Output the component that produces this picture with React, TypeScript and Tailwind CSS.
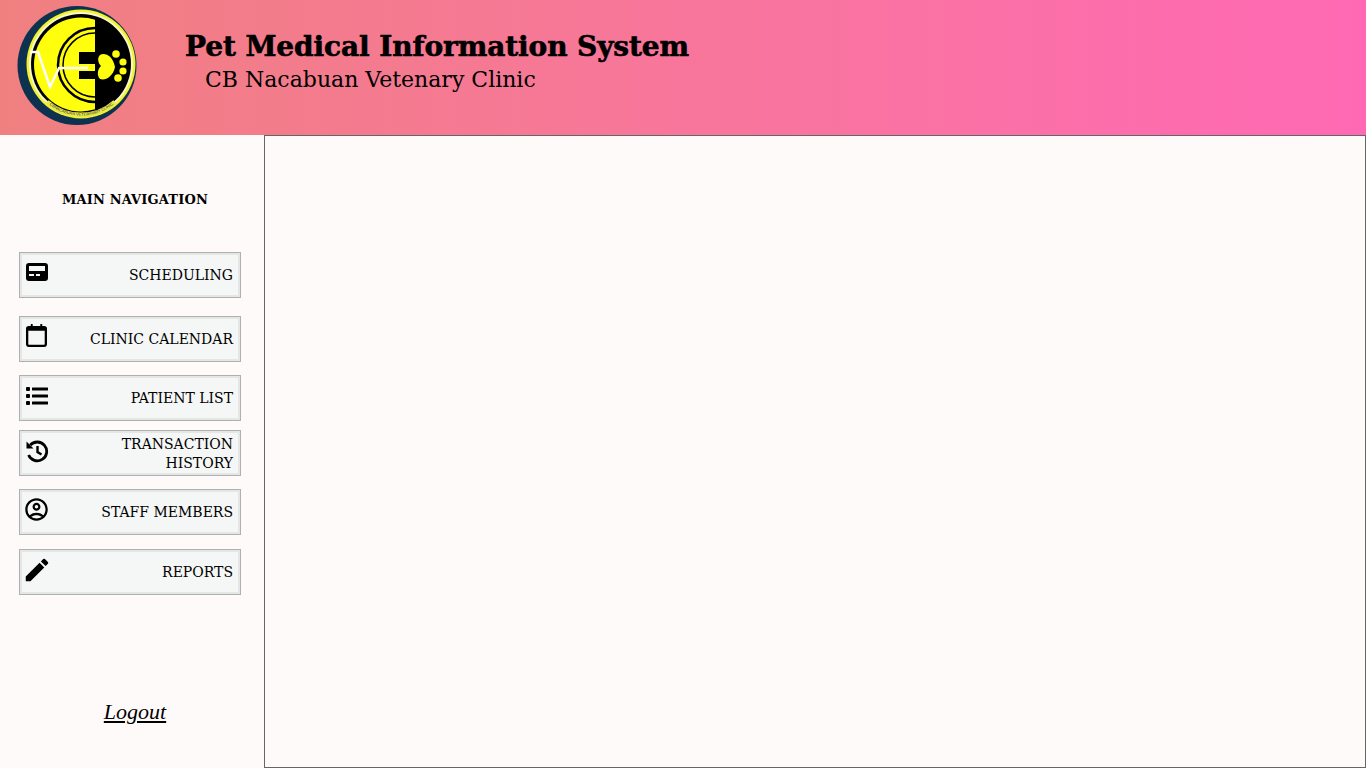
import { MdEdit, MdOutlineAccountCircle } from 'react-icons/md'
import type { ReactNode } from 'react'

function Logo() {
  return (
    <svg width="160" height="135" viewBox="0 0 160 135" className="shrink-0">
      <defs>
        <clipPath id="leftHalf"><rect x="0" y="0" width="95" height="135" /></clipPath>
        <path id="ringText" d="M47 103 A52 52 0 0 0 115 103" />
        <filter id="soft"><feGaussianBlur stdDeviation="0.4" /></filter>
      </defs>
      <g filter="url(#soft)">
        <circle cx="77" cy="65.5" r="59.5" fill="#10324f" />
        <circle cx="81" cy="64" r="54.5" fill="#f2f22e" />
        <circle cx="81" cy="64" r="52" fill="#f8f8c8" />
        <circle cx="81" cy="64" r="50" fill="#000" />
        <g clipPath="url(#leftHalf)">
          <circle cx="81" cy="64.5" r="47" fill="#ffff0a" />
          <circle cx="95" cy="65" r="37" fill="none" stroke="#000" strokeWidth="2.5" />
          <circle cx="95" cy="65" r="32" fill="none" stroke="#000" strokeWidth="1.5" />
          <rect x="79" y="52" width="16" height="12" fill="#000" />
          <rect x="79" y="71" width="16" height="8" fill="#000" />
        </g>
        <path d="M30 52 H38 L50 87 L59 68 H88" fill="none" stroke="#fff" strokeWidth="2.5" />
        <path d="M115 67 C113 55 104 52 100 55 C97 58 98 63 101 66 C97 70 97 76 100 79 C105 81 113 77 115 67 Z" fill="#ffff0a" />
        <circle cx="116" cy="54" r="3.8" fill="#ffff0a" />
        <circle cx="123" cy="62" r="3.6" fill="#ffff0a" />
        <circle cx="123" cy="71" r="3.6" fill="#ffff0a" />
        <circle cx="118" cy="78" r="3.8" fill="#ffff0a" />
        <path d="M47 102 A51 51 0 0 0 115 102" fill="none" stroke="#e9e94a" strokeWidth="5" />
      </g>
      <text fontSize="4" fill="#333" fontFamily="'Liberation Sans', sans-serif">
        <textPath href="#ringText" startOffset="3">CBNACABUAN VETERINARY CLINIC</textPath>
      </text>
    </svg>
  )
}

function PagerIcon() {
  return (
    <svg width="24" height="24" viewBox="0 0 24 24" fill="currentColor">
      <path d="M4 2h16a3 3 0 0 1 3 3v12a3 3 0 0 1-3 3H4a3 3 0 0 1-3-3V5a3 3 0 0 1 3-3Zm0 3v5h16V5H4Zm0 8v2h5v-2H4Zm7 0v2h4v-2h-4Z" fillRule="evenodd" />
    </svg>
  )
}

function CalendarIcon() {
  return (
    <svg width="21" height="23" viewBox="0 0 22 24" fill="currentColor" className="ml-[1px] -mt-[2px]">
      <path d="M5 0h2v2h8V0h2v2h2a3 3 0 0 1 3 3v16a3 3 0 0 1-3 3H3a3 3 0 0 1-3-3V5a3 3 0 0 1 3-3h2V0ZM2.4 7v14a.6.6 0 0 0 .6.6h16a.6.6 0 0 0 .6-.6V7H2.4Z" fillRule="evenodd" />
    </svg>
  )
}

function ListIcon() {
  return (
    <svg width="24" height="20" viewBox="0 0 24 20" fill="currentColor">
      <rect x="1" y="1" width="4" height="4" rx="1" />
      <rect x="1" y="8" width="4" height="4" rx="1" />
      <rect x="1" y="15" width="4" height="4" rx="1" />
      <rect x="7" y="1.5" width="16" height="3" rx="0.5" />
      <rect x="7" y="8.5" width="16" height="3" rx="0.5" />
      <rect x="7" y="15.5" width="16" height="3" rx="0.5" />
    </svg>
  )
}

function HistoryIcon() {
  return (
    <svg width="24" height="24" viewBox="0 0 24 24" fill="none" stroke="currentColor" strokeWidth="2.8">
      <path d="M5.2 6.2A9.4 9.4 0 1 1 3.6 16" />
      <path d="M1.5 2.5v7h7Z" fill="currentColor" stroke="none" />
      <path d="M12.5 7v6l4 2.5" strokeWidth="2.4" />
    </svg>
  )
}

type Item = { label: ReactNode; icon: ReactNode; margin: string }

const items: Item[] = [
  { label: 'SCHEDULING', icon: <PagerIcon />, margin: 'mt-[42px]' },
  { label: 'CLINIC CALENDAR', icon: <CalendarIcon />, margin: 'mt-[18px]' },
  { label: 'PATIENT LIST', icon: <ListIcon />, margin: 'mt-[13px]' },
  { label: <span className="block pt-0.5">TRANSACTION<br />HISTORY</span>, icon: <HistoryIcon />, margin: 'mt-[9px]' },
  { label: 'STAFF MEMBERS', icon: <MdOutlineAccountCircle size={27} className="-ml-0.5" />, margin: 'mt-[13px]' },
  { label: 'REPORTS', icon: <MdEdit size={30} className="-ml-[3px]" />, margin: 'mt-[14px]' },
]

export default function App() {
  return (
    <div className="h-[768px] overflow-hidden bg-[#fffafa] text-black font-['DejaVu_Serif','Liberation_Serif',serif]">
      {/* cabecera */}
      <header className="flex h-[135px] bg-gradient-to-r from-[#f08080] to-[#ff69b4]">
        <Logo />
        <div className="ml-[25px] pt-[29px]">
          <h1 className="text-[28px] leading-[36px] font-bold tracking-[-0.1px] [-webkit-text-stroke:0.6px_black]">Pet Medical Information System</h1>
          <p className="ml-[20px] -mt-px text-[22px] leading-[32px]">CB Nacabuan Vetenary Clinic</p>
        </div>
      </header>

      <div className="flex h-[633px]">
        <aside className="flex w-[264px] shrink-0 flex-col">
          <div className="mt-[55px] h-[20px] pl-[6px] text-center text-[13px] leading-[20px] font-bold tracking-[0.15px]">MAIN NAVIGATION</div>
          <nav className="flex flex-col">
            {items.map((it, i) => (
              <a key={i} href="#" className={`${it.margin} ml-[19px] flex h-[46px] w-[222px] items-center justify-between border border-[#b0b0b0] bg-[#f5f6f6] pr-[7px] pl-[5px] shadow-[inset_0_0_0_2px_#e5e6e6]`}>
                <span className="-mt-[5px] flex h-[28px] w-[28px] items-center">{it.icon}</span>
                <span className="text-right text-[14px] leading-[19px]">{it.label}</span>
              </a>
            ))}
          </nav>
          <a href="#" className="mt-[105px] pl-[6px] text-center text-[22px] leading-[24px] italic underline font-['Liberation_Serif',serif]">Logout</a>
        </aside>
        <main className="flex-1 border border-[#666666]" />
      </div>
    </div>
  )
}
